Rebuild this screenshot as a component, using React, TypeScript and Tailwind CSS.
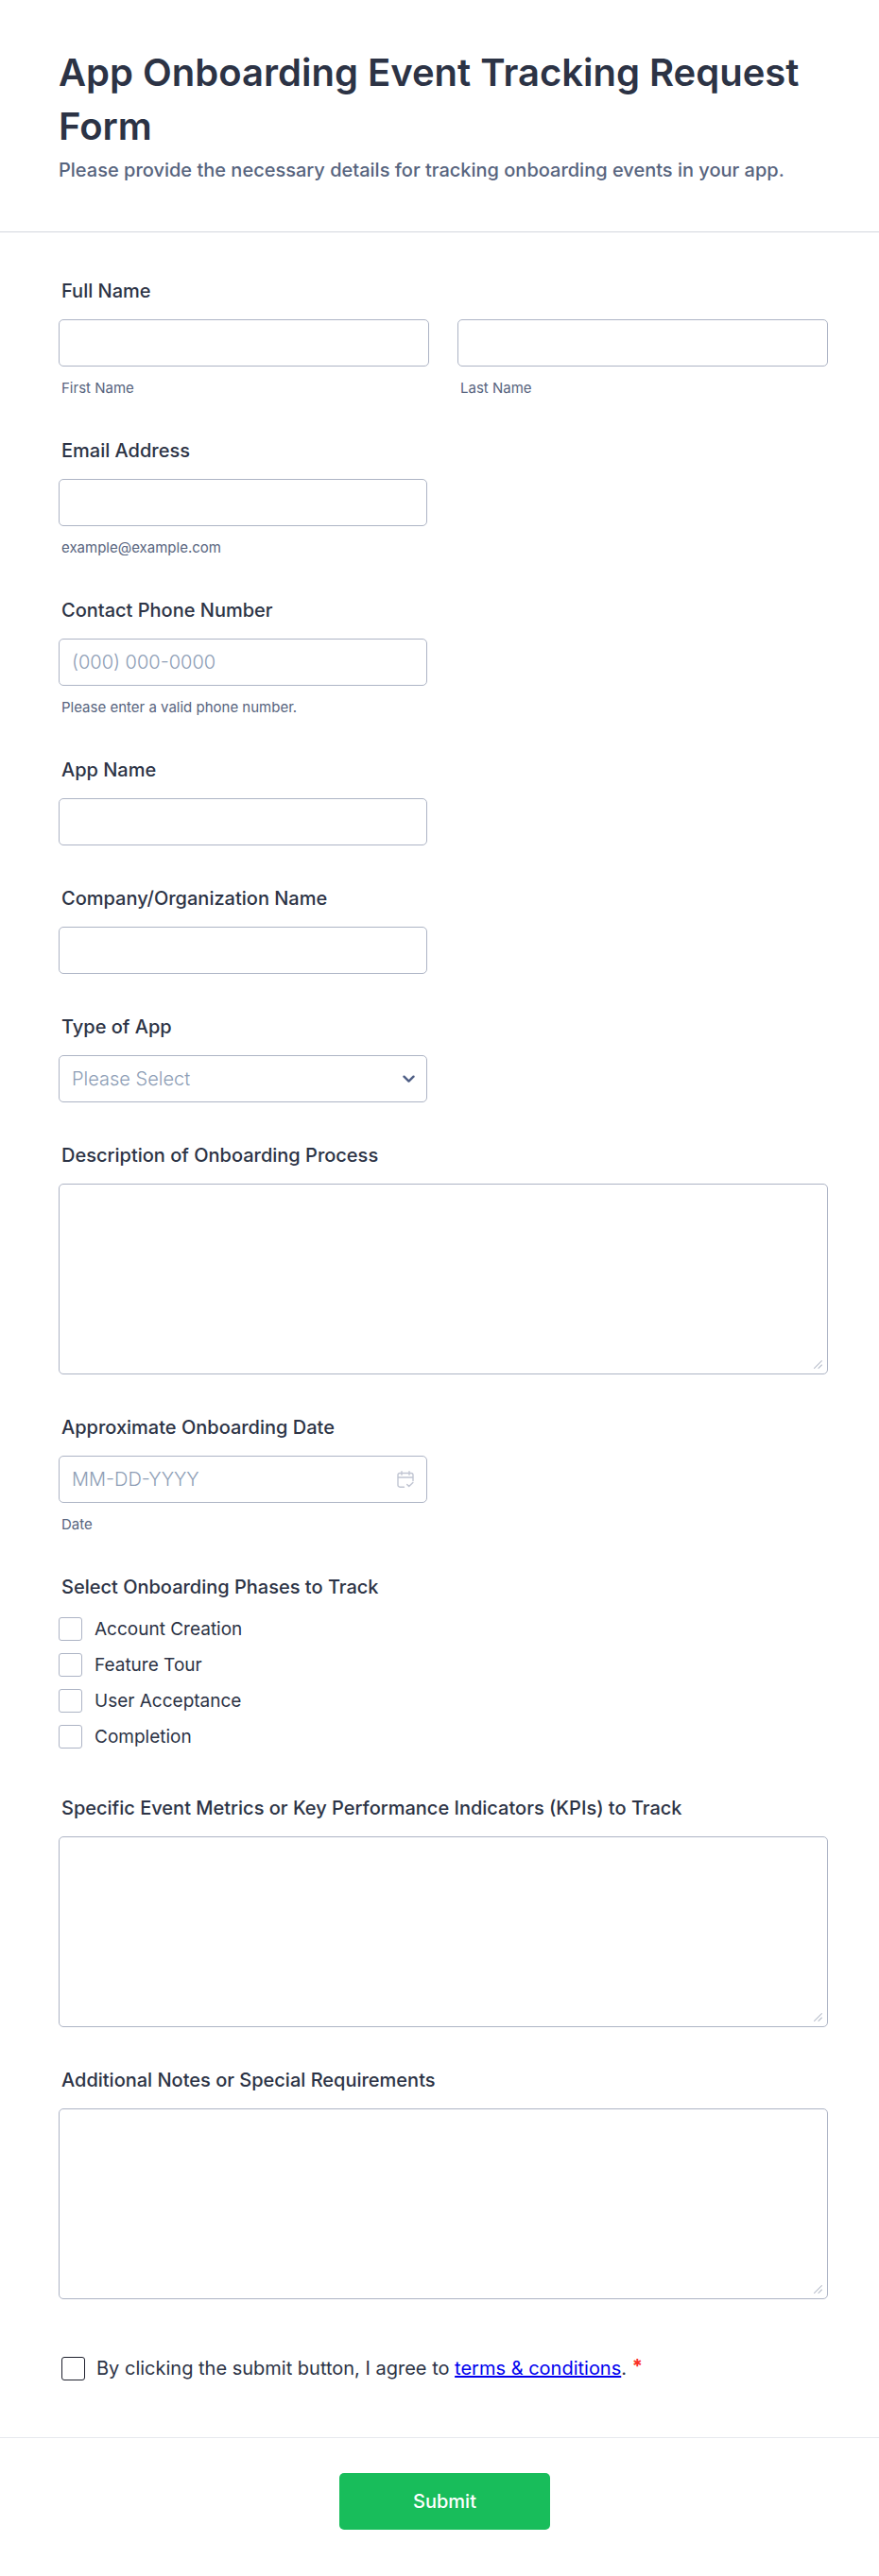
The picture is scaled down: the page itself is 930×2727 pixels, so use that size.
import React from 'react';
import clsx from 'clsx';

const inputBase =
  'block w-full rounded-[5px] border border-[#adb4c5] bg-white text-[20px] leading-[24px] font-light text-[#2c3345] placeholder:text-[#8d9db5] placeholder:opacity-100 outline-none focus:border-blue-500';

const phases = ['Account Creation', 'Feature Tour', 'User Acceptance', 'Completion'];

interface FieldProps {
  id: string;
  label: string;
  hint?: string;
  wide?: boolean;
  children: React.ReactNode;
}

const Hint = ({ htmlFor, children }: { htmlFor: string; children: React.ReactNode }) => (
  <label htmlFor={htmlFor} className="mt-[13px] block pl-[3px] text-[15px] leading-[20px] text-[#57647e]">
    {children}
  </label>
);

const Field = ({ id, label, hint, wide, children }: FieldProps) => (
  <div>
    <label htmlFor={id} className="mb-[18px] block pl-[3px] text-[20px] leading-[24px] font-medium">
      {label}
    </label>
    <div className={clsx('relative', !wide && 'max-w-[390px]')}>{children}</div>
    {hint && <Hint htmlFor={id}>{hint}</Hint>}
  </div>
);

const TextBox = ({ id, type = 'text', placeholder }: { id: string; type?: string; placeholder?: string }) => (
  <input id={id} name={id} type={type} placeholder={placeholder} className={clsx(inputBase, 'h-[50px] px-[13px]')} />
);

const TextArea = ({ id }: { id: string }) => (
  <>
    <textarea id={id} name={id} className={clsx(inputBase, 'h-[202px] resize-none px-[13px] py-2')} />
    <svg
      className="pointer-events-none absolute right-[6px] bottom-[6px] h-[9px] w-[9px]"
      viewBox="0 0 9 9"
      fill="none"
      stroke="#b9bfcc"
      strokeWidth="1.1"
      strokeLinecap="round"
    >
      <path d="M0.6 8.4L8.4 0.6M5 8.4L8.4 5" />
    </svg>
  </>
);

const CalendarIcon = () => (
  <svg
    className="h-[18px] w-[18px]"
    viewBox="0 0 18 18"
    fill="none"
    stroke="#c0c5d2"
    strokeWidth="1.4"
    strokeLinecap="round"
    strokeLinejoin="round"
  >
    <path d="M7.5 17.2H3a2 2 0 0 1-2-2V4.5a2 2 0 0 1 2-2h12a2 2 0 0 1 2 2v6M1 7h16M5 0.8v3.4M13 0.8v3.4" />
    <path d="M10.7 14.6l2 2 4.2-4.2" />
  </svg>
);

export default function App() {
  return (
    <form
      className="min-h-screen bg-white font-['Inter',sans-serif] text-[#2c3345]"
      onSubmit={(e) => e.preventDefault()}
    >
      <header className="border-b border-[#d3d6de] px-[62px] pt-12 pb-[53px]">
        <h1 className="text-[40px] leading-[57px] font-semibold">App Onboarding Event Tracking Request Form</h1>
        <p className="mt-[6px] text-[20px] leading-[24px] font-medium text-[#57647e]">
          Please provide the necessary details for tracking onboarding events in your app.
        </p>
      </header>

      <div className="flex flex-col gap-11 pt-[50px] pr-[54px] pb-[60px] pl-[62px]">
        <fieldset>
          <legend className="mb-[18px] block pl-[3px] text-[20px] leading-[24px] font-medium">Full Name</legend>
          <div className="grid grid-cols-2 gap-[30px]">
            <div>
              <TextBox id="first-name" />
              <Hint htmlFor="first-name">First Name</Hint>
            </div>
            <div>
              <TextBox id="last-name" />
              <Hint htmlFor="last-name">Last Name</Hint>
            </div>
          </div>
        </fieldset>

        <Field id="email" label="Email Address" hint="example@example.com">
          <TextBox id="email" type="email" />
        </Field>

        <Field id="phone" label="Contact Phone Number" hint="Please enter a valid phone number.">
          <TextBox id="phone" type="tel" placeholder="(000) 000-0000" />
        </Field>

        <Field id="app-name" label="App Name">
          <TextBox id="app-name" />
        </Field>

        <Field id="company" label="Company/Organization Name">
          <TextBox id="company" />
        </Field>

        <Field id="app-type" label="Type of App">
          <select
            id="app-type"
            name="app-type"
            defaultValue=""
            className={clsx(inputBase, 'h-[50px] appearance-none pr-10 pl-[13px] text-[#8d9db5]')}
          >
            <option value="">Please Select</option>
          </select>
          <svg
            className="pointer-events-none absolute top-[21px] right-[13px] h-[9px] w-[13px]"
            viewBox="0 0 13 9"
            fill="none"
            stroke="#4e5e85"
            strokeWidth="2.4"
            strokeLinecap="round"
            strokeLinejoin="round"
          >
            <path d="M1.5 1.7L6.5 6.6L11.5 1.7" />
          </svg>
        </Field>

        <Field id="description" label="Description of Onboarding Process" wide>
          <TextArea id="description" />
        </Field>

        <Field id="date" label="Approximate Onboarding Date" hint="Date">
          <TextBox id="date" placeholder="MM-DD-YYYY" />
          <button type="button" aria-label="Choose date" className="absolute top-4 right-[14px]">
            <CalendarIcon />
          </button>
        </Field>

        <fieldset>
          <legend className="mb-[18px] block pl-[3px] text-[20px] leading-[24px] font-medium">
            Select Onboarding Phases to Track
          </legend>
          <div className="flex flex-col items-start gap-[13px] pt-[2px] pb-[7px]">
            {phases.map((phase) => (
              <label key={phase} className="flex items-center gap-[13px] text-[19px] leading-[25px]">
                <input
                  type="checkbox"
                  name="phases"
                  value={phase}
                  className="h-[25px] w-[25px] shrink-0 appearance-none rounded-[3px] border border-[#adb4c5] bg-white checked:bg-blue-500"
                />
                {phase}
              </label>
            ))}
          </div>
        </fieldset>

        <Field id="metrics" label="Specific Event Metrics or Key Performance Indicators (KPIs) to Track" wide>
          <TextArea id="metrics" />
        </Field>

        <Field id="notes" label="Additional Notes or Special Requirements" wide>
          <TextArea id="notes" />
        </Field>

        <div className="flex items-center gap-3 pt-[17px] pl-[3px] text-[20px] leading-[25px]">
          <input
            id="terms"
            type="checkbox"
            required
            className="h-[25px] w-[25px] shrink-0 appearance-none rounded-[3px] border border-[#20222f] bg-white checked:bg-blue-500"
          />
          <label htmlFor="terms">
            By clicking the submit button, I agree to{' '}
            <a href="#terms" className="text-[#0000ee] underline">
              terms &amp; conditions
            </a>
            . <span className="align-text-top text-[20px] leading-none font-bold text-[#fa2d25]">*</span>
          </label>
        </div>
      </div>

      <div className="flex justify-center border-t border-[#e6e8ee] pt-[37px] pr-[51px] pb-[49px] pl-[62px]">
        <button
          type="submit"
          className="h-[60px] w-[223px] rounded-[5px] bg-[#18bd5b] text-[20px] leading-[24px] font-medium text-white"
        >
          Submit
        </button>
      </div>
    </form>
  );
}
